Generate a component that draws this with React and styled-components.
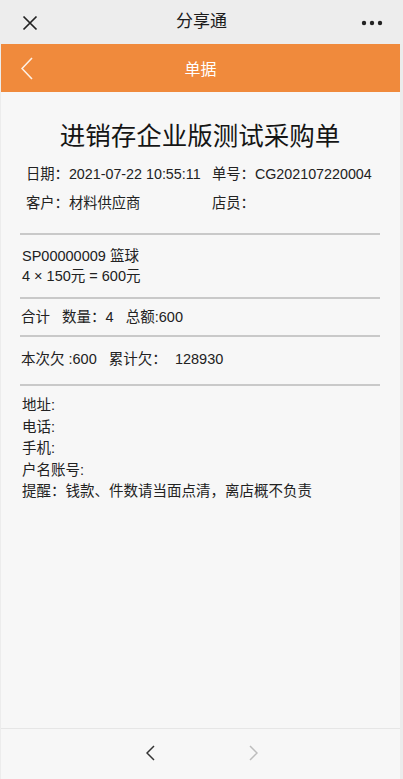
import React from 'react'
import styled, { createGlobalStyle } from 'styled-components'

const GlobalStyle = createGlobalStyle`
  html, body {
    margin: 0;
    padding: 0;
    background: #ececec;
    font-family: "Liberation Sans", "Noto Sans CJK SC", sans-serif;
  }
  #root {
    height: 100vh;
  }
`

const Page = styled.div`
  display: flex;
  flex-direction: column;
  height: 100vh;
  overflow: hidden;
`

const TopBar = styled.div`
  height: 44px;
  flex: 0 0 44px;
  display: grid;
  grid-template-columns: 60px 1fr 60px;
  align-items: center;
  background: #ededed;
  color: #1b1b1b;
`

const TopTitle = styled.div`
  text-align: center;
  font-size: 17px;
  line-height: 44px;
  padding-bottom: 2px;
`

const IconCell = styled.div`
  display: flex;
  align-items: center;
  justify-content: ${p => (p.$right ? 'flex-end' : 'flex-start')};
  padding: ${p => (p.$right ? '0 20px 0 0' : '0 0 0 22px')};
  height: 100%;
`

const Shell = styled.div`
  flex: 1;
  display: flex;
  flex-direction: column;
  margin: 0 3px 0 1px;
  background: #f7f7f7;
  min-height: 0;
`

const NavBar = styled.div`
  height: 48px;
  flex: 0 0 48px;
  display: grid;
  grid-template-columns: 60px 1fr 60px;
  align-items: center;
  background: #f08a3c;
  color: #fff;
`

const NavTitle = styled.div`
  text-align: center;
  font-size: 16px;
`

const Body = styled.div`
  flex: 1;
  padding: 0 20px 0 19px;
`

const Title = styled.h1`
  margin: 0;
  padding-top: 31px;
  height: 58px;
  box-sizing: border-box;
  text-align: center;
  font-size: 25.5px;
  line-height: 26px;
  font-weight: 400;
  color: #151515;
`

const InfoGrid = styled.div`
  display: grid;
  grid-template-columns: 186px auto;
  padding: 14px 0 0 6px;
  row-gap: 9px;
  font-size: 14.3px;
  line-height: 20px;
  color: #222;
  white-space: nowrap;
`

const Rule = styled.div`
  height: 2px;
  background: #c9c9c9;
  margin-top: ${p => p.$top}px;
`

const Block = styled.div`
  padding: ${p => p.$pad};
  font-size: 14.5px;
  line-height: ${p => p.$lh || 20}px;
  color: #222;
  white-space: pre;
`

const BottomBar = styled.div`
  height: 48px;
  flex: 0 0 48px;
  display: flex;
  align-items: center;
  justify-content: center;
  gap: 94px;
  border-top: 1px solid #e6e6e6;
  padding-left: 2px;
  padding-bottom: 2px;
`

const Chevron = ({ dir = 'left', color = '#fff', w = 12, h = 23, sw = 1.6 }) => (
  <svg width={w} height={h} viewBox={`0 0 ${w} ${h}`}>
    <polyline
      points={dir === 'left'
        ? `${w - 1},1 1,${h / 2} ${w - 1},${h - 1}`
        : `1,1 ${w - 1},${h / 2} 1,${h - 1}`}
      fill="none"
      stroke={color}
      strokeWidth={sw}
      strokeLinejoin="miter"
    />
  </svg>
)

const CloseIcon = () => (
  <svg width="16" height="16" viewBox="0 0 16 16">
    <path d="M1.5 1.5 L14.5 14.5 M14.5 1.5 L1.5 14.5" stroke="#222" strokeWidth="1.7" />
  </svg>
)

const MoreIcon = () => (
  <svg width="22" height="6" viewBox="0 0 22 6">
    <circle cx="3" cy="3" r="2.2" fill="#222" />
    <circle cx="11" cy="3" r="2.2" fill="#222" />
    <circle cx="19" cy="3" r="2.2" fill="#222" />
  </svg>
)

const footerLines = [
  '地址:',
  '电话:',
  '手机:',
  '户名账号:',
  '提醒：钱款、件数请当面点清，离店概不负责',
]

const App = () => {
  return (
    <Page>
      <GlobalStyle />
      <TopBar>
        <IconCell><CloseIcon /></IconCell>
        <TopTitle>分享通</TopTitle>
        <IconCell $right><MoreIcon /></IconCell>
      </TopBar>
      <Shell>
        <NavBar>
          <IconCell style={{ paddingLeft: 20 }}>
            <Chevron color="#fdf1e6" />
          </IconCell>
          <NavTitle>单据</NavTitle>
          <div />
        </NavBar>
        <Body>
          <Title>进销存企业版测试采购单</Title>
          <InfoGrid>
            <span>日期：2021-07-22 10:55:11</span>
            <span>单号：CG202107220004</span>
            <span>客户：材料供应商</span>
            <span>店员：</span>
          </InfoGrid>
          <Rule $top={20} />
          <Block $pad="11px 0 0 2px">
            SP00000009 篮球{'\n'}4 × 150元 = 600元
          </Block>
          <Rule $top={11} />
          <Block $pad="8px 0 0 1px">合计   数量：4   总额:600</Block>
          <Rule $top={8} />
          <Block $pad="12px 0 0 1px">本次欠 :600   累计欠：  128930</Block>
          <Rule $top={15} />
          <Block $pad="9px 0 0 2px" $lh={21.5}>
            {footerLines.join('\n')}
          </Block>
        </Body>
        <BottomBar>
          <Chevron color="#333" w={9} h={16} sw={1.5} />
          <Chevron dir="right" color="#bdbdbd" w={9} h={16} sw={1.5} />
        </BottomBar>
      </Shell>
    </Page>
  )
}

export default App
